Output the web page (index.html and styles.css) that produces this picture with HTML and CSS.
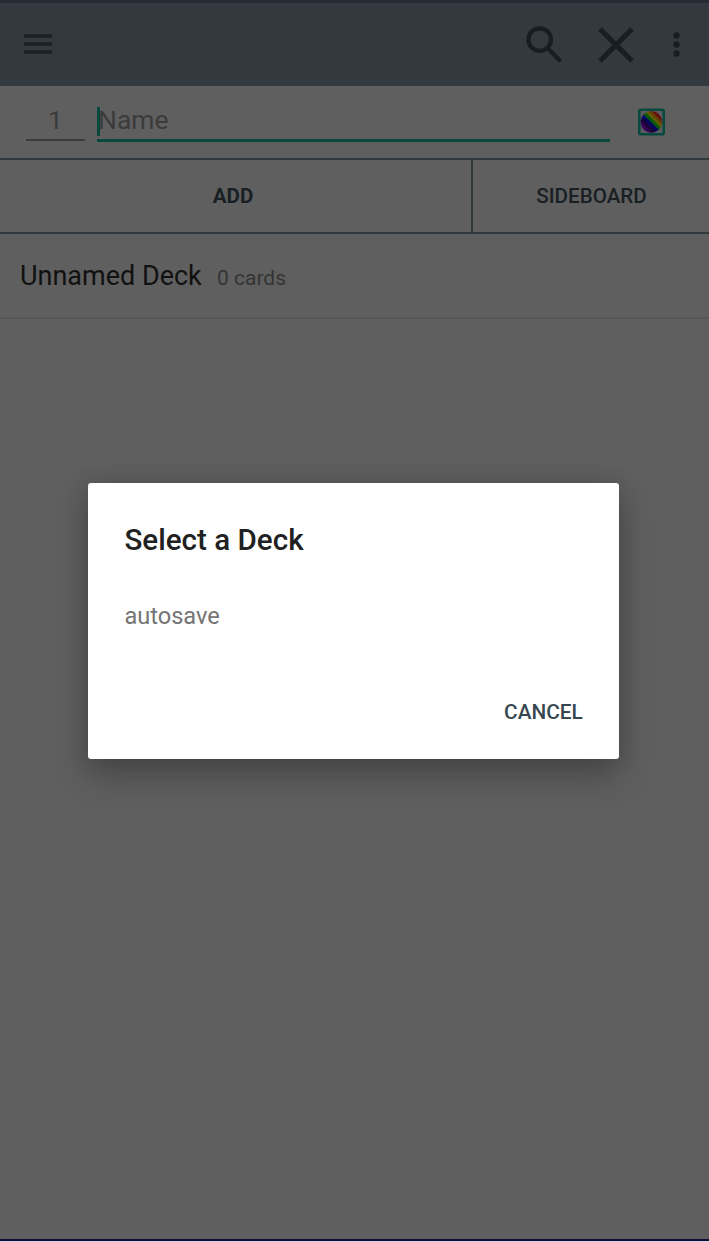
FILE: index.html
```html
<!DOCTYPE html>
<html lang="en">
<head>
<meta charset="utf-8">
<title>Deck editor</title>
<link rel="stylesheet" href="styles.css">
</head>
<body>
<div class="screen">
  <header class="toolbar">
    <svg class="icon-menu" viewBox="0 0 28 20"><path d="M0 2h28M0 10h28M0 18h28" stroke="#1b2124" stroke-width="3.6"/></svg>
    <svg class="icon-search" viewBox="0 0 37 37"><circle cx="13.7" cy="13.6" r="11.3" fill="none" stroke="#191d20" stroke-width="4.2"/><path d="M21.8 21.6l2.3.1 12 12-3 3-12-12z" fill="#191d20"/></svg>
    <svg class="icon-close" viewBox="0 0 36 36"><path d="M2 2l32 32M34 2L2 34" stroke="#191d20" stroke-width="5"/></svg>
    <svg class="icon-more" viewBox="0 0 7 25"><g fill="#191d20"><circle cx="3.5" cy="3.4" r="3.2"/><circle cx="3.5" cy="12.4" r="3.2"/><circle cx="3.5" cy="21.4" r="3.2"/></g></svg>
  </header>
  <div class="entry">
    <div class="quantity">1</div>
    <div class="name"><span class="caret"></span><span class="hint">Name</span></div>
    <svg class="icon-colors" viewBox="0 0 27 28">
      <defs><clipPath id="disc"><circle cx="13.4" cy="14" r="10.7"/></clipPath></defs>
      <rect x="1.3" y="1.8" width="24.4" height="24.4" rx="1.5" fill="#5c5b60" stroke="#07493f" stroke-width="2.6"/>
      <g clip-path="url(#disc)"><g transform="rotate(45 13.4 14)">
        <path fill="#640d0c" d="M1 2h25v4.4H1z"/>
        <path fill="#633c00" d="M1 6.2h25v2.8H1z"/>
        <path fill="#605d00" d="M1 8.8h25v2.7H1z"/>
        <path fill="#08580b" d="M1 11.3h25v3.2H1z"/>
        <path fill="#06065f" d="M1 14.3h25v4H1z"/>
        <path fill="#1d0034" d="M1 18.1h25v3.3H1z"/>
        <path fill="#36005b" d="M1 21.2h25V26H1z"/>
      </g></g>
    </svg>
  </div>
  <div class="tabs"><div class="tab tab-add">ADD</div><div class="tab tab-side">SIDEBOARD</div></div>
  <div class="deck"><span class="deck-name">Unnamed Deck</span><span class="deck-count">0 cards</span></div>
  <div class="list"></div>
  <div class="navigation"></div>
</div>
<div class="dialog">
  <h1 class="dialog-title">Select a Deck</h1>
  <div class="dialog-item">autosave</div>
  <div class="dialog-actions"><span class="cancel">CANCEL</span></div>
</div>
</body>
</html>
```
FILE: styles.css
```css
* { box-sizing: border-box; }
body { margin: 0; width: 709px; height: 1242px; overflow: hidden; font-family: Roboto, sans-serif; }
svg { display: block; flex: none; }
.screen { height: 1242px; display: flex; flex-direction: column; background: #5f5f5f; }
.toolbar { height: 86px; flex: none; display: flex; align-items: flex-start; border-top: 3px solid #252c34; background: #32393f; }
.icon-menu { width: 28px; height: 20px; margin: 31px 0 0 24px; }
.icon-search { width: 37px; height: 37px; margin: 23px 0 0 474px; }
.icon-close { width: 36px; height: 36px; margin: 23.5px 0 0 35px; }
.icon-more { width: 7px; height: 25px; margin: 29px 0 0 39px; }
.entry { height: 72px; flex: none; display: flex; padding-left: 26px; font-size: 26.5px; line-height: 31px; color: #3b3b3b; }
.quantity { width: 59px; height: 55px; padding-top: 18px; text-align: center; border-bottom: 2px solid #3b3b3b; }
.name { width: 513px; height: 56px; margin-left: 12px; padding-top: 18px; border-bottom: 3px solid #07493f; display: flex; }
.caret { width: 3px; height: 29px; margin-top: 3px; background: #07493f; }
.hint { margin-left: -2px; }
.icon-colors { width: 27px; height: 28px; margin: 22px 0 0 28px; }
.tabs { height: 76px; flex: none; display: flex; border-top: 2px solid #30393e; border-bottom: 2px solid #30393e; font-size: 20.6px; line-height: 72px; text-align: center; color: #192024; }
.tab-add { width: 473px; padding-right: 5px; border-right: 2px solid #30393e; font-weight: 700; }
.tab-side { width: 236px; padding-left: 1px; font-weight: 500; }
.deck { height: 85px; flex: none; display: flex; align-items: baseline; padding: 25px 0 0 20px; border-bottom: 2px solid #565656; line-height: 34px; }
.deck-name { width: 197px; font-size: 27px; color: #111; }
.deck-count { font-size: 21px; color: #343434; }
.list { flex: 1; }
.navigation { height: 3px; background: #110e38; border-bottom: 1px solid #d5cee4; }
.dialog { position: absolute; left: 88.4px; top: 482.7px; width: 530.4px; height: 276.3px; padding: 39px 36px 0; background: #fff; border-radius: 3px; box-shadow: 0 17px 34px rgba(0,0,0,.25), 0 0 22px rgba(0,0,0,.12); }
.dialog-title { margin: 0; font-size: 29.6px; line-height: 36px; font-weight: 500; color: #212121; }
.dialog-item { margin-top: 43px; font-size: 23.6px; line-height: 30px; color: #757575; }
.dialog-actions { display: flex; justify-content: flex-end; margin-top: 67px; }
.cancel { font-size: 20.8px; line-height: 28px; font-weight: 500; color: #37474f; }
```
